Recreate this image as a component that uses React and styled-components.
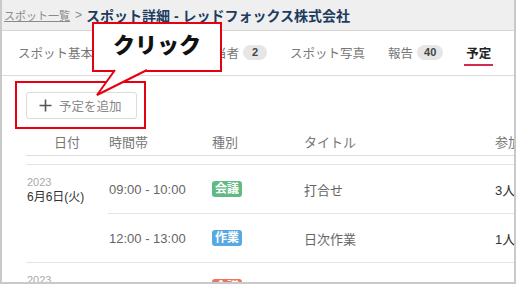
import React from 'react'
import styled, { createGlobalStyle } from 'styled-components';

const GlobalStyle = createGlobalStyle`
  body {
    margin: 0;
    background: #fff;
    font-family: "Liberation Sans", "Noto Sans CJK JP", sans-serif;
  }
`;

const Frame = styled.div`
  position: relative;
  width: 516px;
  height: 284px;
  box-sizing: border-box;
  border: 2px solid #c9c9c9;
  border-top: 0;
  overflow: hidden;
  background: #fff;
`;

const Header = styled.div`
  height: 30px;
  background: #efefef;
  border-bottom: 1px solid #d6d6d6;
  display: flex;
  align-items: center;
  padding-left: 2px;
  white-space: nowrap;
`;

const Crumb = styled.a`
  font-size: 11px;
  color: #8a8a8a;
  text-decoration: underline;
`;

const Sep = styled.span`
  font-size: 12px;
  color: #8a8a8a;
  margin: 0 4px 0 5px;
`;

const Title = styled.h1`
  margin: 0;
  font-size: 14px;
  font-weight: 700;
  color: #1d3b60;
`;

const Tabs = styled.div`
  height: 44px;
  border-bottom: 1px solid #dcdcdc;
  display: flex;
  gap: 23px;
  padding-left: 16px;
  white-space: nowrap;
`;

const Tab = styled.div`
  padding-top: 11px;
  display: flex;
  flex-direction: column;
  align-items: center;
`;

const TabLabel = styled.div`
  display: flex;
  align-items: center;
  gap: 4px;
  height: 20px;
  font-size: 12.5px;
  color: ${p => p.$active ? '#222' : '#777'};
  font-weight: ${p => p.$active ? 700 : 400};
`;

const Underline = styled.div`
  margin-top: 2px;
  width: calc(100% + 4px);
  height: 2px;
  background: ${p => p.$active ? '#d42a4f' : 'transparent'};
`;

const Count = styled.span`
  display: inline-block;
  min-width: 24px;
  box-sizing: border-box;
  padding: 0 7px;
  height: 15px;
  line-height: 15px;
  border-radius: 8px;
  background: #e6e6e6;
  color: #444;
  font-size: 11px;
  font-weight: 700;
  text-align: center;
`;

const Content = styled.div`
  padding: 16px 0 0 24px;
`;

const AddButton = styled.button`
  display: flex;
  align-items: center;
  gap: 7px;
  width: 111px;
  height: 27px;
  box-sizing: border-box;
  padding: 0 0 0 12px;
  border: 1px solid #dcdcdc;
  border-radius: 3px;
  background: #fff;
  color: #888;
  font-family: inherit;
  font-size: 12.5px;
`;

const Table = styled.div`
  margin-top: 12px;
  width: 560px;
`;

const HeadRow = styled.div`
  display: grid;
  grid-template-columns: 82px 103px 92px 191px 80px;
  height: 24px;
  line-height: 24px;
  border-bottom: 1px solid #dedede;
  font-size: 13px;
  color: #777;
`;

const HeadCell = styled.div`
  text-align: ${p => p.$center ? 'center' : 'left'};
  padding-left: ${p => p.$center ? 0 : 1}px;
`;

const Body = styled.div`
  margin-top: 8px;
  border-top: 1px solid #e4e4e4;
`;

const Group = styled.div`
  display: grid;
  grid-template-columns: 82px 1fr;
  border-bottom: 1px solid #e4e4e4;
`;

const DateCell = styled.div`
  padding: 10px 0 0 1px;
`;

const Year = styled.div`
  font-size: 11px;
  color: #aaa;
  line-height: 14px;
`;

const Day = styled.div`
  font-size: 12px;
  color: #333;
  line-height: 16px;
`;

const Row = styled.div`
  display: grid;
  grid-template-columns: 103px 92px 191px 80px;
  align-items: center;
  height: 48px;
  font-size: 13px;
  color: #666;
  & + & {
    border-top: 1px solid #e4e4e4;
  }
`;

const Cell = styled.div`
  padding-left: 1px;
  color: ${p => p.$dark ? '#333' : '#666'};
`;

const Kind = styled.span`
  display: inline-block;
  padding: 0 3px;
  height: 16px;
  line-height: 16px;
  border-radius: 3px;
  font-size: 12px;
  font-weight: 700;
  color: #fff;
  background: ${p => p.$color};
`;

const Highlight = styled.div`
  position: absolute;
  left: 13px;
  top: 81px;
  width: 131px;
  height: 48px;
  box-sizing: border-box;
  border: 2px solid #e60012;
`;

const Callout = styled.div`
  position: absolute;
  left: 90px;
  top: 22px;
  width: 130px;
  height: 50px;
  box-sizing: border-box;
  border: 2px solid #e60012;
  background: #fff;
  display: flex;
  align-items: center;
  justify-content: center;
  padding-bottom: 8px;
  font-size: 22px;
  font-weight: 900;
  color: #111;
`;

const Tail = styled.svg`
  position: absolute;
  left: 90px;
  top: 68px;
`;

const kinds = {
  meeting: { label: '会議', color: '#62ba83' },
  work: { label: '作業', color: '#58a9e1' },
  deal: { label: '会議', color: '#ef735f' },
};

const schedule = [
  {
    year: '2023', day: '6月6日(火)',
    items: [
      { time: '09:00 - 10:00', kind: 'meeting', title: '打合せ', people: '3人' },
      { time: '12:00 - 13:00', kind: 'work', title: '日次作業', people: '1人' },
    ],
  },
  {
    year: '2023', day: '6月7日(水)',
    items: [
      { time: '11:00 - 12:00', kind: 'deal', title: '商談', people: '1人' },
    ],
  },
];

function Plus() {
  return (
    <svg width="13" height="13" viewBox="0 0 13 13">
      <path d="M6.5 0.5v12M0.5 6.5h12" stroke="#555" strokeWidth="1.6" fill="none" />
    </svg>
  );
}

export default function App() {
  return (
    <>
      <GlobalStyle />
      <Frame>
        <Header>
          <Crumb>スポット一覧</Crumb>
          <Sep>&gt;</Sep>
          <Title>スポット詳細 - レッドフォックス株式会社</Title>
        </Header>
        <Tabs>
          <Tab><TabLabel>スポット基本情報</TabLabel><Underline /></Tab>
          <Tab><TabLabel>連絡先</TabLabel><Underline /></Tab>
          <Tab><TabLabel>担当者<Count>2</Count></TabLabel><Underline /></Tab>
          <Tab><TabLabel>スポット写真</TabLabel><Underline /></Tab>
          <Tab><TabLabel>報告<Count>40</Count></TabLabel><Underline /></Tab>
          <Tab><TabLabel $active>予定</TabLabel><Underline $active /></Tab>
        </Tabs>
        <Content>
          <AddButton><Plus />予定を追加</AddButton>
          <Table>
            <HeadRow>
              <HeadCell $center>日付</HeadCell>
              <HeadCell>時間帯</HeadCell>
              <HeadCell>種別</HeadCell>
              <HeadCell>タイトル</HeadCell>
              <HeadCell>参加者</HeadCell>
            </HeadRow>
            <Body>
              {schedule.map((g, i) => (
                <Group key={i}>
                  <DateCell>
                    <Year>{g.year}</Year>
                    <Day>{g.day}</Day>
                  </DateCell>
                  <div>
                    {g.items.map((it, j) => (
                      <Row key={j}>
                        <Cell>{it.time}</Cell>
                        <Cell><Kind $color={kinds[it.kind].color}>{kinds[it.kind].label}</Kind></Cell>
                        <Cell>{it.title}</Cell>
                        <Cell $dark>{it.people}</Cell>
                      </Row>
                    ))}
                  </div>
                </Group>
              ))}
            </Body>
          </Table>
        </Content>
        <Highlight />
        <Callout>クリック</Callout>
        <Tail width="60" height="30" viewBox="0 0 60 30">
          <polygon points="23,2 5,27 55,2" fill="#fff" />
          <polyline points="23,2 5,27 55,2" fill="none" stroke="#e60012" strokeWidth="2" />
        </Tail>
      </Frame>
    </>
  );
}
